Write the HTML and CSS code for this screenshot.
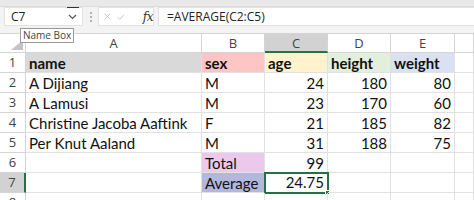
FILE: index.html
```html
<!DOCTYPE html>
<html>
<head>
<title>Sheet</title>
<link rel="stylesheet" href="styles.css">
</head>
<body>
<div class="topstrip"></div>
<div class="fbar">
	<div class="namebox">
		<span class="nb-text">C7</span>
		<span class="nb-cursor"></span>
		<svg class="nb-arrow" width="9" height="6" viewBox="0 0 9 6"><path d="M1 1 L4.5 4.5 L8 1" fill="none" stroke="#555" stroke-width="1.2"/></svg>
	</div>
	<div class="dots"><i></i><i></i><i></i></div>
	<div class="fbtns">
		<svg width="11" height="11" viewBox="0 0 11 11"><path d="M1 1 L10 10 M10 1 L1 10" stroke="#bdbdbd" stroke-width="1.2"/></svg>
		<svg width="12" height="10" viewBox="0 0 12 10"><path d="M1 5 L4.5 8.5 L11 1.5" fill="none" stroke="#bdbdbd" stroke-width="1.2"/></svg>
		<span class="fx">fx</span>
	</div>
	<div class="formula">=AVERAGE(C2:C5)</div>
</div>
<div class="sheet">
	<div class="corner"></div>
	<div class="ch">A</div>
	<div class="ch">B</div>
	<div class="ch sel">C</div>
	<div class="ch">D</div>
	<div class="ch">E</div>
	<div class="ch"></div>

	<div class="rh">1</div>
	<div class="c b bg-name">name</div>
	<div class="c b bg-sex">sex</div>
	<div class="c b bg-age">age</div>
	<div class="c b bg-height">height</div>
	<div class="c b bg-weight">weight</div>
	<div class="c"></div>

	<div class="rh">2</div>
	<div class="c">A Dijiang</div>
	<div class="c">M</div>
	<div class="c n">24</div>
	<div class="c n">180</div>
	<div class="c n">80</div>
	<div class="c"></div>

	<div class="rh">3</div>
	<div class="c">A Lamusi</div>
	<div class="c">M</div>
	<div class="c n">23</div>
	<div class="c n">170</div>
	<div class="c n">60</div>
	<div class="c"></div>

	<div class="rh">4</div>
	<div class="c">Christine Jacoba Aaftink</div>
	<div class="c">F</div>
	<div class="c n">21</div>
	<div class="c n">185</div>
	<div class="c n">82</div>
	<div class="c"></div>

	<div class="rh">5</div>
	<div class="c">Per Knut Aaland</div>
	<div class="c">M</div>
	<div class="c n">31</div>
	<div class="c n">188</div>
	<div class="c n">75</div>
	<div class="c"></div>

	<div class="rh">6</div>
	<div class="c"></div>
	<div class="c bg-total">Total</div>
	<div class="c n">99</div>
	<div class="c"></div>
	<div class="c"></div>
	<div class="c"></div>

	<div class="rh sel">7</div>
	<div class="c"></div>
	<div class="c bg-avg">Average</div>
	<div class="c n active">24.75<span class="handle"></span></div>
	<div class="c"></div>
	<div class="c"></div>
	<div class="c"></div>

	<div class="rh">8</div>
	<div class="c"></div>
	<div class="c"></div>
	<div class="c"></div>
	<div class="c"></div>
	<div class="c"></div>
	<div class="c"></div>
</div>
<div class="tip">Name Box</div>
</body>
</html>
```

FILE: styles.css
```css
*{
	box-sizing: border-box;
}
body{
	margin: 0;
	width: 474px;
	height: 200px;
	overflow: hidden;
	background: #f3f3f3;
	font-family: "Open Sans", "Noto Sans", sans-serif;
	position: relative;
}
.topstrip{
	height: 7px;
	background: #e9e9e9;
	border-bottom: 1px solid #dcdcdc;
}
.fbar{
	display: flex;
	align-items: center;
	height: 19px;
	padding-left: 4px;
	margin-bottom: 7px;
}
.namebox{
	width: 79px;
	height: 19px;
	background: #fff;
	border: 1px solid #e2e2e2;
	display: flex;
	align-items: center;
	padding-left: 6px;
	position: relative;
}
.nb-text{
	font-size: 12px;
	color: #222;
	flex: 1;
}
.nb-cursor{
	position: absolute;
	right: 3px;
	top: -1px;
	width: 12px;
	height: 1px;
	background: #333;
}
.nb-arrow{
	margin-right: 5px;
}
.dots{
	width: 15px;
	display: flex;
	flex-direction: column;
	align-items: center;
	gap: 2px;
}
.dots i{
	width: 2px;
	height: 2px;
	background: #b0b0b0;
}
.fbtns{
	width: 56px;
	height: 19px;
	background: #fff;
	border: 1px solid #e2e2e2;
	display: flex;
	align-items: center;
	padding-left: 5px;
	gap: 6px;
}
.fx{
	font-family: "DejaVu Serif", "Liberation Serif", serif;
	font-style: italic;
	font-size: 12px;
	color: #333;
	margin-left: 12px;
	letter-spacing: -0.5px;
}
.formula{
	flex: 1;
	height: 19px;
	margin-left: 4px;
	background: #fff;
	border: 1px solid #e2e2e2;
	border-right: none;
	font-size: 12px;
	color: #222;
	line-height: 17px;
	padding-left: 8px;
}
.sheet{
	display: grid;
	grid-template-columns: 26px 176px 63px 63px 63px 64px 19px;
	grid-template-rows: 19px repeat(8, 20px);
	background: #fff;
	border-top: 1px solid #d4d4d4;
}
.corner{
	background: #fff;
	border-right: 1px solid #d4d4d4;
	border-bottom: 1px solid #d4d4d4;
	position: relative;
}
.corner:after{
	content: "";
	position: absolute;
	right: 2px;
	bottom: 2px;
	border-left: 12px solid transparent;
	border-bottom: 10px solid #c4c4c4;
}
.ch{
	background: #fff;
	border-right: 1px solid #d4d4d4;
	border-bottom: 1px solid #d4d4d4;
	font-size: 13px;
	color: #444;
	text-align: center;
	line-height: 18px;
}
.ch.sel{
	background: #d2d2d2;
	border-bottom: 2px solid #217346;
}
.rh{
	background: #fff;
	border-right: 1px solid #d4d4d4;
	border-bottom: 1px solid #d4d4d4;
	font-size: 13px;
	color: #444;
	text-align: center;
	line-height: 19px;
}
.rh.sel{
	background: #d2d2d2;
	border-right: 2px solid #217346;
}
.c{
	border-right: 1px solid #e1e1e1;
	border-bottom: 1px solid #e1e1e1;
	font-family: "Lato", "Noto Sans", sans-serif;
	font-size: 15px;
	color: #111;
	line-height: 20px;
	padding: 0 3px;
	white-space: nowrap;
	position: relative;
}
.c.n{
	text-align: right;
}
.c.b{
	font-weight: bold;
}
.bg-name{ background: #d9d9d9; }
.bg-sex{ background: #ffc4c4; }
.bg-age{ background: #fff2cc; }
.bg-height{ background: #e2efda; }
.bg-weight{ background: #d9e1f2; }
.bg-total{ background: #ebc8ec; }
.bg-avg{ background: #b4b7dc; }
.c.active{
	outline: 2px solid #217346;
	outline-offset: -1px;
	line-height: 19px;
}
.handle{
	position: absolute;
	right: -3px;
	bottom: -3px;
	width: 5px;
	height: 5px;
	background: #217346;
	border: 1px solid #fff;
}
.tip{
	position: absolute;
	left: 20px;
	top: 28px;
	background: #fff;
	border: 1px solid #9a9a9a;
	font-size: 10px;
	color: #444;
	padding: 0 2px;
	line-height: 13px;
}
```
